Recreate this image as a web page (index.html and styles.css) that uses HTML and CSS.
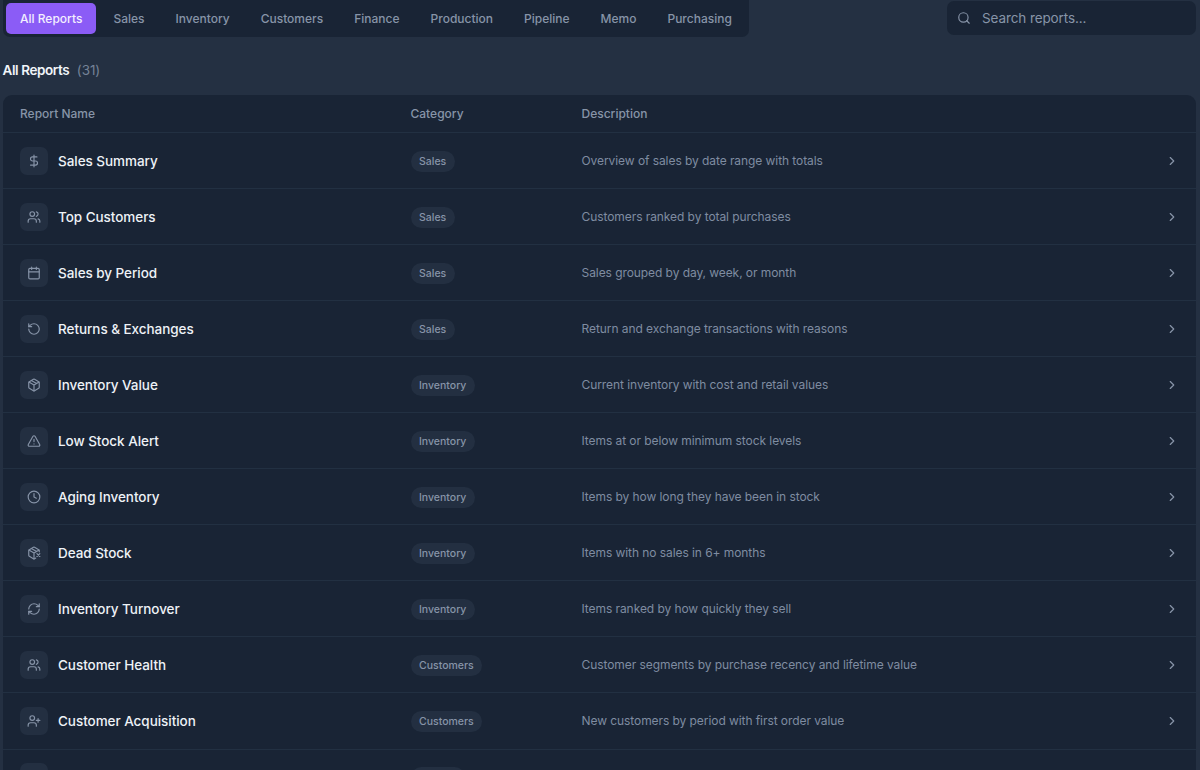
FILE: index.html
```
<!DOCTYPE html>
<html lang="en">

<head>
	<meta charset="utf-8">
	<title>Reports</title>
	<link rel="stylesheet" href="styles.css">
</head>

<body>
	<svg class="sprite" aria-hidden="true">
		<symbol id="search" viewBox="0 0 24 24"><circle cx="11" cy="11" r="8"/><path d="m21 21-4.3-4.3"/></symbol>
		<symbol id="chevron" viewBox="0 0 24 24"><path d="m9 18 6-6-6-6"/></symbol>
		<symbol id="dollar" viewBox="0 0 24 24"><path d="M12 2v20M17 5H9.500a3.500 3.500 0 0 0 0 7h5a3.500 3.500 0 0 1 0 7H6"/></symbol>
		<symbol id="users" viewBox="0 0 24 24"><path d="M16 21v-2a4 4 0 0 0-4-4H6a4 4 0 0 0-4 4v2"/><circle cx="9" cy="7" r="4"/><path d="M22 21v-2a4 4 0 0 0-3-3.870M16 3.130a4 4 0 0 1 0 7.750"/></symbol>
		<symbol id="calendar" viewBox="0 0 24 24"><path d="M8 2v4M16 2v4M3 10h18"/><rect x="3" y="4" width="18" height="18" rx="2"/></symbol>
		<symbol id="rotate" viewBox="0 0 24 24"><path d="M3 12a9 9 0 1 0 9-9 9.750 9.750 0 0 0-6.740 2.740L3 8"/><path d="M3 3v5h5"/></symbol>
		<symbol id="package" viewBox="0 0 24 24"><path d="M11 21.730a2 2 0 0 0 2 0l7-4A2 2 0 0 0 21 16V8a2 2 0 0 0-1-1.730l-7-4a2 2 0 0 0-2 0l-7 4A2 2 0 0 0 3 8v8a2 2 0 0 0 1 1.730z"/><path d="M12 22V12M3.300 7 12 12l8.700-5M7.500 4.270l9 5.150"/></symbol>
		<symbol id="alert" viewBox="0 0 24 24"><path d="m21.730 18-8-14a2 2 0 0 0-3.480 0l-8 14A2 2 0 0 0 4 21h16a2 2 0 0 0 1.730-3"/><path d="M12 9v4M12 17h.01"/></symbol>
		<symbol id="clock" viewBox="0 0 24 24"><circle cx="12" cy="12" r="10"/><path d="M12 6v6l4 2"/></symbol>
		<symbol id="package-x" viewBox="0 0 24 24"><path d="M21 10V8a2 2 0 0 0-1-1.730l-7-4a2 2 0 0 0-2 0l-7 4A2 2 0 0 0 3 8v8a2 2 0 0 0 1 1.730l7 4a2 2 0 0 0 2 0l2-1.140"/><path d="m7.500 4.270 9 5.150M3.290 7 12 12l8.710-5M12 22V12M17 13l5 5M17 18l5-5"/></symbol>
		<symbol id="refresh" viewBox="0 0 24 24"><path d="M3 12a9 9 0 0 1 9-9 9.750 9.750 0 0 1 6.740 2.740L21 8"/><path d="M21 3v5h-5M21 12a9 9 0 0 1-9 9 9.750 9.750 0 0 1-6.740-2.740L3 16"/><path d="M8 16H3v5"/></symbol>
		<symbol id="user-plus" viewBox="0 0 24 24"><path d="M16 21v-2a4 4 0 0 0-4-4H6a4 4 0 0 0-4 4v2"/><circle cx="9" cy="7" r="4"/><path d="M19 8v6M22 11h-6"/></symbol>
	</svg>

	<header class="toolbar">
		<nav class="tabs">
			<a class="tab active">All Reports</a>
			<a class="tab">Sales</a>
			<a class="tab">Inventory</a>
			<a class="tab">Customers</a>
			<a class="tab">Finance</a>
			<a class="tab">Production</a>
			<a class="tab">Pipeline</a>
			<a class="tab">Memo</a>
			<a class="tab">Purchasing</a>
		</nav>
		<div class="search">
			<svg class="icon"><use href="#search"/></svg>
			<span>Search reports...</span>
		</div>
	</header>

	<h2 class="title">All Reports <span class="count">(31)</span></h2>

	<main class="table">
		<div class="row head">
			<span>Report Name</span>
			<span>Category</span>
			<span>Description</span>
		</div>
		<div class="row">
			<div class="name"><i class="tile"><svg class="icon"><use href="#dollar"/></svg></i>Sales Summary</div>
			<div class="category"><span class="pill">Sales</span></div>
			<div class="desc">Overview of sales by date range with totals</div>
			<svg class="icon"><use href="#chevron"/></svg>
		</div>
		<div class="row">
			<div class="name"><i class="tile"><svg class="icon"><use href="#users"/></svg></i>Top Customers</div>
			<div class="category"><span class="pill">Sales</span></div>
			<div class="desc">Customers ranked by total purchases</div>
			<svg class="icon"><use href="#chevron"/></svg>
		</div>
		<div class="row">
			<div class="name"><i class="tile"><svg class="icon"><use href="#calendar"/></svg></i>Sales by Period</div>
			<div class="category"><span class="pill">Sales</span></div>
			<div class="desc">Sales grouped by day, week, or month</div>
			<svg class="icon"><use href="#chevron"/></svg>
		</div>
		<div class="row">
			<div class="name"><i class="tile"><svg class="icon"><use href="#rotate"/></svg></i>Returns &amp; Exchanges</div>
			<div class="category"><span class="pill">Sales</span></div>
			<div class="desc">Return and exchange transactions with reasons</div>
			<svg class="icon"><use href="#chevron"/></svg>
		</div>
		<div class="row">
			<div class="name"><i class="tile"><svg class="icon"><use href="#package"/></svg></i>Inventory Value</div>
			<div class="category"><span class="pill">Inventory</span></div>
			<div class="desc">Current inventory with cost and retail values</div>
			<svg class="icon"><use href="#chevron"/></svg>
		</div>
		<div class="row">
			<div class="name"><i class="tile"><svg class="icon"><use href="#alert"/></svg></i>Low Stock Alert</div>
			<div class="category"><span class="pill">Inventory</span></div>
			<div class="desc">Items at or below minimum stock levels</div>
			<svg class="icon"><use href="#chevron"/></svg>
		</div>
		<div class="row">
			<div class="name"><i class="tile"><svg class="icon"><use href="#clock"/></svg></i>Aging Inventory</div>
			<div class="category"><span class="pill">Inventory</span></div>
			<div class="desc">Items by how long they have been in stock</div>
			<svg class="icon"><use href="#chevron"/></svg>
		</div>
		<div class="row">
			<div class="name"><i class="tile"><svg class="icon"><use href="#package-x"/></svg></i>Dead Stock</div>
			<div class="category"><span class="pill">Inventory</span></div>
			<div class="desc">Items with no sales in 6+ months</div>
			<svg class="icon"><use href="#chevron"/></svg>
		</div>
		<div class="row">
			<div class="name"><i class="tile"><svg class="icon"><use href="#refresh"/></svg></i>Inventory Turnover</div>
			<div class="category"><span class="pill">Inventory</span></div>
			<div class="desc">Items ranked by how quickly they sell</div>
			<svg class="icon"><use href="#chevron"/></svg>
		</div>
		<div class="row">
			<div class="name"><i class="tile"><svg class="icon"><use href="#users"/></svg></i>Customer Health</div>
			<div class="category"><span class="pill">Customers</span></div>
			<div class="desc">Customer segments by purchase recency and lifetime value</div>
			<svg class="icon"><use href="#chevron"/></svg>
		</div>
		<div class="row">
			<div class="name"><i class="tile"><svg class="icon"><use href="#user-plus"/></svg></i>Customer Acquisition</div>
			<div class="category"><span class="pill">Customers</span></div>
			<div class="desc">New customers by period with first order value</div>
			<svg class="icon"><use href="#chevron"/></svg>
		</div>
		<div class="row">
			<div class="name"><i class="tile"></i></div>
			<div class="category"><span class="pill empty"></span></div>
		</div>
	</main>
</body>

</html>
```
FILE: styles.css
```
* {
	box-sizing: border-box;
}

body {
	margin: 0;
	height: 770px;
	padding: 0 4px 0 3px;
	overflow: hidden;
	background: #243042;
	color: #8794a8;
	font-family: Inter, "Liberation Sans", sans-serif;
	font-size: 12px;
}

.sprite {
	display: none;
}

.icon {
	display: block;
	width: 14px;
	height: 14px;
	fill: none;
	stroke: currentColor;
	stroke-width: 2;
	stroke-linecap: round;
	stroke-linejoin: round;
}

.toolbar {
	display: flex;
	justify-content: space-between;
	height: 37px;
}

.tabs {
	display: flex;
	gap: 3px;
	width: 746px;
	padding: 3px;
	border-radius: 0 0 7px 7px;
	background: #192435;
}

.tab {
	height: 31px;
	padding: 0 14px;
	border-radius: 5px;
	font-weight: 500;
	line-height: 31px;
	white-space: nowrap;
}

.tab.active {
	background: #8b5cf6;
	color: #f3efff;
}

.search {
	display: flex;
	align-items: center;
	gap: 11px;
	width: 249px;
	height: 34px;
	margin-top: 1px;
	padding-left: 10px;
	border-radius: 7px;
	background: #192435;
	font-size: 13.5px;
	letter-spacing: -0.1px;
	line-height: 16px;
}

.title {
	display: flex;
	gap: 7.5px;
	margin: 0 0 0 -0.5px;
	height: 58px;
	padding-top: 24px;
	color: #f1f5f9;
	font-size: 13.5px;
	font-weight: 600;
	letter-spacing: -0.4px;
	line-height: 18px;
}

.count {
	color: #748297;
	font-weight: 400;
	letter-spacing: -0.1px;
}

.table {
	border-radius: 9px 9px 0 0;
	background: #192435;
}

.row {
	display: grid;
	grid-template-columns: 390.5px 171px 1fr 14px;
	align-items: center;
	height: 56.05px;
	padding: 0 17px;
	border-bottom: 1px solid #223042;
}

.head {
	height: 38px;
	font-weight: 500;
}

.name {
	display: flex;
	align-items: center;
	gap: 10.5px;
	color: #eef2f7;
	font-size: 13.5px;
	font-weight: 500;
	letter-spacing: -0.05px;
}

.tile {
	display: grid;
	place-items: center;
	width: 27.5px;
	height: 28px;
	border-radius: 7px;
	background: #232f41;
	color: #8794a8;
}

.category {
	display: flex;
	padding-top: 1px;
}

.pill {
	height: 21px;
	padding: 0 8.5px;
	border-radius: 11px;
	background: #232f41;
	font-size: 10.5px;
	font-weight: 500;
	line-height: 21px;
}

.pill.empty {
	width: 54px;
}

.desc {
	color: #7f8ca1;
	letter-spacing: -0.07px;
}
```
